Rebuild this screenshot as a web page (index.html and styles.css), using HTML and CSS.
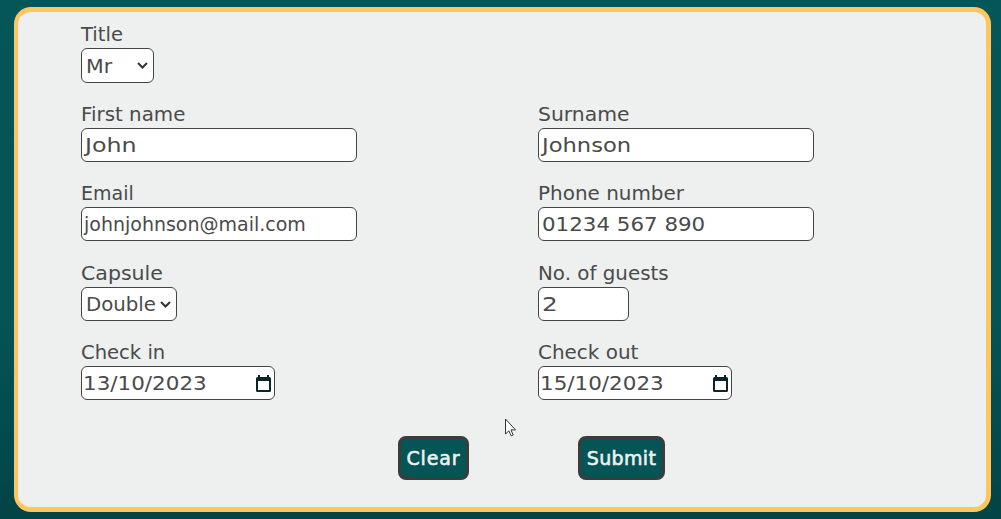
FILE: index.html
```
<!DOCTYPE html>
<html lang="en">
<head>
<meta charset="utf-8">
<title>Booking</title>
<link rel="stylesheet" href="styles.css">
</head>
<body>
<main class="panel">
  <div class="fields">
    <div class="field full"><label class="t-title">Title</label><div class="control select title"><span class="t-mr">Mr</span><svg class="chevron" width="11" height="7" viewBox="0 0 11 7"><path d="M1 1l4.500 4.500L10 1"/></svg></div></div>
    <div class="field"><label class="t-first">First name</label><div class="control wide"><span class="t-john">John</span></div></div>
    <div class="field"><label class="t-sur">Surname</label><div class="control wide"><span class="t-johnson">Johnson</span></div></div>
    <div class="field"><label>Email</label><div class="control wide email"><span class="t-mail">johnjohnson@mail.com</span></div></div>
    <div class="field"><label class="t-phone">Phone number</label><div class="control wide"><span class="t-tel">01234 567 890</span></div></div>
    <div class="field"><label class="t-cap">Capsule</label><div class="control select capsule"><span class="t-double">Double</span><svg class="chevron" width="11" height="7" viewBox="0 0 11 7"><path d="M1 1l4.500 4.500L10 1"/></svg></div></div>
    <div class="field"><label class="t-guests">No. of guests</label><div class="control guests"><span class="t-two">2</span></div></div>
    <div class="field"><label class="t-in">Check in</label><div class="control date"><span class="t-date">13/10/2023</span><svg class="calendar" width="15" height="17" viewBox="0 0 15 17"><path fill-rule="evenodd" d="M2 0h2v2h7V0h2v2h.5Q15 2 15 3.500v12Q15 17 13.500 17h-12Q0 17 0 15.500v-12Q0 2 1.500 2H2zM2 6v9h11V6z"/></svg></div></div>
    <div class="field"><label class="t-out">Check out</label><div class="control date"><span class="t-date">15/10/2023</span><svg class="calendar" width="15" height="17" viewBox="0 0 15 17"><path fill-rule="evenodd" d="M2 0h2v2h7V0h2v2h.5Q15 2 15 3.500v12Q15 17 13.500 17h-12Q0 17 0 15.500v-12Q0 2 1.500 2H2zM2 6v9h11V6z"/></svg></div></div>
  </div>
  <div class="actions">
    <button class="clear">Clear</button>
    <button class="submit">Submit</button>
  </div>
</main>
<svg class="cursor" width="12" height="19" viewBox="0 0 12 19"><path d="M1.500 1v15l3.400-3.200 2.300 5.100 2-1-2.300-5H11.500z"/></svg>
</body>
</html>
```
FILE: styles.css
```
* { box-sizing: border-box; }
body {
  margin: 0;
  height: 519px;
  padding: 7px 10px 7px 14px;
  overflow: hidden;
  background: linear-gradient(#055658 0%, #055456 60%, #034446 100%);
  font-family: "DejaVu Sans", sans-serif;
  font-size: 19px;
  color: #4a4a4a;
}
.panel {
  height: 505px;
  padding: 12px 0 0 63px;
  border: 5px solid #ffc660;
  border-left-width: 4px;
  border-radius: 17px;
  background: #eef0f0;
}
.fields {
  display: grid;
  grid-template-columns: 457px 1fr;
  grid-template-rows: 80px 79px 80px 79px 76px;
}
.full { grid-column: 1 / -1; }
label { display: block; width: max-content; height: 24px; line-height: 20px; white-space: nowrap; }
label, .control span { transform-origin: left center; }
.control {
  display: flex;
  align-items: center;
  height: 34px;
  padding: 0 3px;
  border: 1px solid #444;
  border-radius: 6px;
  background: #fff;
  line-height: 32px;
  white-space: nowrap;
}
.wide { width: 276px; }
.email { padding-left: 2px; }
.select { justify-content: space-between; padding: 0 5px 0 4px; }
.title { width: 73px; height: 35px; }
.capsule { width: 96px; }
.guests { width: 91px; }
.date { width: 194px; height: 34px; justify-content: space-between; padding: 0 3px 0 1px; }
.chevron { fill: none; stroke: #333; stroke-width: 2; }
.calendar { fill: #0a2528; }
.t-title { transform: scaleX(1.03); }
.t-first { transform: scaleX(1.045); }
.t-sur { transform: scaleX(1.07); }
.t-phone, .t-out { transform: scaleX(1.05); }
.t-cap { transform: scaleX(1.08); }
.t-guests { transform: scaleX(1.045); }
.t-in { transform: scaleX(1.03); }
.t-mr { transform: scaleX(1.08); }
.t-john { transform: scaleX(1.25); }
.t-johnson { transform: scaleX(1.19); }
.t-tel { transform: scaleX(1.125); }
.t-two { transform: scaleX(1.3); }
.t-double { transform: scaleX(1.04); margin-right: -4px; }
.t-date { transform: scaleX(1.13); }
.actions { display: flex; gap: 109px; padding-left: 317px; margin-top: 18px; }
button {
  height: 44px;
  padding: 0;
  border: 3px solid #3c3c3c;
  border-radius: 8px;
  background: #055556;
  color: #eef0f0;
  font: inherit;
  -webkit-text-stroke: .6px #eef0f0;
}
.clear { width: 71px; letter-spacing: .9px; }
.submit { width: 87px; letter-spacing: .35px; }
.cursor { position: absolute; left: 504px; top: 418px; fill: #fff; stroke: #333; stroke-width: 1; }
```
